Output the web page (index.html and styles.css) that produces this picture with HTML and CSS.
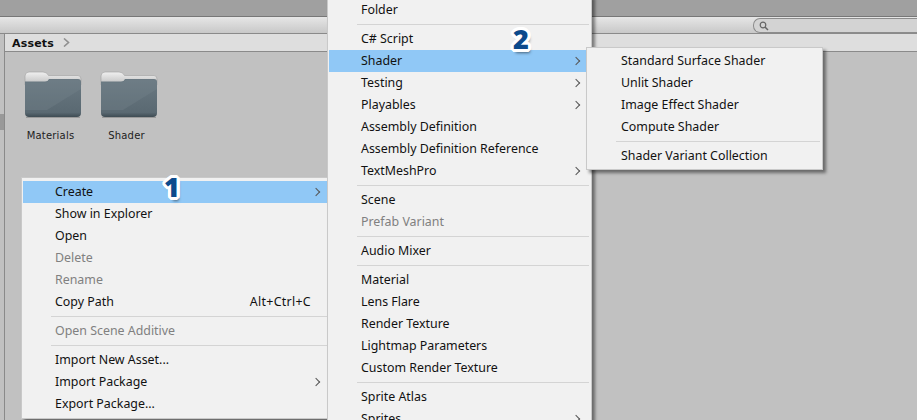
FILE: index.html
```html
<!DOCTYPE html>
<html lang="en">
<head>
<meta charset="UTF-8" />
<title>Assets - Create Shader</title>
<link rel="stylesheet" href="styles.css">
</head>
<body>
<svg class="defs" width="0" height="0">
    <defs>
        <linearGradient id="tabFill" x1="0" y1="0" x2="0" y2="1">
            <stop offset="0" stop-color="#f0f0f0"/>
            <stop offset="1" stop-color="#bdbdbd"/>
        </linearGradient>
        <linearGradient id="bodyFill" x1="0" y1="0" x2="0" y2="1">
            <stop offset="0" stop-color="#6a7982"/>
            <stop offset="0.88" stop-color="#5a6972"/>
            <stop offset="1" stop-color="#3e4b53"/>
        </linearGradient>
        <symbol id="folderIcon" viewBox="0 0 58 47">
            <path d="M1 5 Q1 1 5 1 H19 Q23 1 24.500 4.500 H54 Q57 4.500 57 8 V14 H1 Z" fill="url(#tabFill)" stroke="#a8a8a8" stroke-width="0.7"/>
            <path d="M1 10.500 H21 Q24 10.500 25 8 H54 Q57 8 57 11 V42 Q57 46 53 46 H5 Q1 46 1 42 Z" fill="url(#bodyFill)"/>
            <path d="M1 11.500 H21 Q24 11.500 25 9 H54 Q57 9 57 12 V18 L23 39 H1 Z" fill="#75848d" opacity="0.35"/>
            <path d="M2 46.500 H56" stroke="#9a9a9a" stroke-width="1"/>
        </symbol>
    </defs>
</svg>
<div class="topbar"></div>
<div class="toolbar">
    <div class="search">
        <svg class="search-icon" width="10" height="10" viewBox="0 0 10 10"><circle cx="4" cy="4" r="2.8" fill="none" stroke="#666" stroke-width="1.2"/><path d="M6 6 L9 9" stroke="#666" stroke-width="1.5"/></svg>
    </div>
</div>
<div class="main">
    <div class="sidebar"><div class="scroll-thumb"></div></div>
    <div class="browser">
        <div class="crumbs">
            <span class="crumb-name">Assets</span>
            <svg width="7" height="9" viewBox="0 0 7 9"><path d="M1 0.5 L5.5 4.500 L1 8.500" fill="none" stroke="#909090" stroke-width="1.6"/></svg>
        </div>
        <div class="files">
            <div class="file">
                <svg class="folder" width="58" height="47"><use href="#folderIcon"/></svg>
                <span class="file-name">Materials</span>
            </div>
            <div class="file">
                <svg class="folder" width="58" height="47"><use href="#folderIcon"/></svg>
                <span class="file-name">Shader</span>
            </div>
        </div>
    </div>
</div>

<!-- context menu -->
<div class="menu menu-context">
    <div class="item active">Create<span class="arrow"></span></div>
    <div class="item">Show in Explorer</div>
    <div class="item">Open</div>
    <div class="item off">Delete</div>
    <div class="item off">Rename</div>
    <div class="item">Copy Path<span class="key">Alt+Ctrl+C</span></div>
    <div class="sep"></div>
    <div class="item off">Open Scene Additive</div>
    <div class="sep"></div>
    <div class="item">Import New Asset...</div>
    <div class="item">Import Package<span class="arrow"></span></div>
    <div class="item">Export Package...</div>
</div>

<!-- create submenu -->
<div class="menu menu-create">
    <div class="item">Folder</div>
    <div class="sep"></div>
    <div class="item">C# Script</div>
    <div class="item active">Shader<span class="arrow"></span></div>
    <div class="item">Testing<span class="arrow"></span></div>
    <div class="item">Playables<span class="arrow"></span></div>
    <div class="item">Assembly Definition</div>
    <div class="item">Assembly Definition Reference</div>
    <div class="item">TextMeshPro<span class="arrow"></span></div>
    <div class="sep"></div>
    <div class="item">Scene</div>
    <div class="item off">Prefab Variant</div>
    <div class="sep"></div>
    <div class="item">Audio Mixer</div>
    <div class="sep"></div>
    <div class="item">Material</div>
    <div class="item">Lens Flare</div>
    <div class="item">Render Texture</div>
    <div class="item">Lightmap Parameters</div>
    <div class="item">Custom Render Texture</div>
    <div class="sep"></div>
    <div class="item">Sprite Atlas</div>
    <div class="item">Sprites<span class="arrow"></span></div>
</div>

<!-- shader submenu -->
<div class="menu menu-shader">
    <div class="item">Standard Surface Shader</div>
    <div class="item">Unlit Shader</div>
    <div class="item">Image Effect Shader</div>
    <div class="item">Compute Shader</div>
    <div class="sep"></div>
    <div class="item">Shader Variant Collection</div>
</div>

<span class="step step-1">1</span>
<span class="step step-2">2</span>
</body>
</html>
```

FILE: styles.css
```css
html, body {
    height: 100%;
}

body {
    margin: 0;
    height: 420px;
    overflow: hidden;
    position: relative;
    display: flex;
    flex-direction: column;
    background-color: #c1c1c1;
    font-family: "Noto Sans", sans-serif;
}

.defs {
    position: absolute;
}

.topbar {
    height: 16px;
    background-color: #a0a0a0;
    border-bottom: 1px solid #777;
}

.toolbar {
    height: 16px;
    background: linear-gradient(#e6e6e6, #c8c8c8);
    border-bottom: 1px solid #8a8a8a;
    display: flex;
    justify-content: flex-end;
}

.search {
    width: 158px;
    height: 13px;
    margin-top: 1px;
    border: 1px solid #8c8c8c;
    border-right: none;
    border-radius: 7px 0 0 7px;
    background-color: #d3d3d3;
    padding-left: 5px;
}

.search-icon {
    display: block;
    margin-top: 2px;
}

.main {
    flex: 1;
    display: flex;
}

.sidebar {
    width: 4px;
    background-color: #c1c1c1;
    border-right: 1px solid #8a8a8a;
    padding-top: 80px;
}

.scroll-thumb {
    height: 16px;
    background-color: #999;
}

.browser {
    flex: 1;
}

.crumbs {
    height: 17px;
    background-color: #dedede;
    border-bottom: 1px solid #8a8a8a;
    padding-left: 7px;
    display: flex;
    align-items: center;
    gap: 9px;
}

.crumb-name {
    font-family: "DejaVu Sans", sans-serif;
    font-size: 11px;
    font-weight: bold;
    letter-spacing: 0.2px;
    color: #111;
    padding-top: 1px;
}

.files {
    display: flex;
    gap: 18px;
    padding: 19px 0 0 19px;
}

.file {
    width: 58px;
    display: flex;
    flex-direction: column;
    align-items: center;
    gap: 12px;
}

.folder {
    display: block;
}

.file-name {
    font-family: "DejaVu Sans", sans-serif;
    font-size: 10px;
    letter-spacing: 0.2px;
    color: #222;
    line-height: 12px;
    margin-right: 5px;
}

.menu {
    position: absolute;
    background-color: #f1f1f1;
    border: 1px solid #c9c9c9;
    box-shadow: 3px 3px 3px rgba(0, 0, 0, 0.45);
    font-size: 12.4px;
    color: #111;
}

.menu-context {
    left: 21px;
    top: 177px;
    width: 310px;
    padding: 3px 1px;
}

.menu-create {
    left: 327px;
    top: -5px;
    width: 261px;
    padding: 3px 1px;
}

.menu-shader {
    left: 586px;
    top: 47px;
    width: 233px;
    padding: 2px 1px;
}

.menu-shader .item {
    padding-left: 33px;
}

.item {
    height: 22px;
    line-height: 21px;
    padding-left: 32px;
    position: relative;
    white-space: nowrap;
}

.item.active {
    background-color: #90c8f6;
}

.item.off {
    color: #808080;
}

.sep {
    height: 7px;
    margin-left: 28px;
    display: flex;
    align-items: center;
}

.sep::before {
    content: "";
    flex: 1;
    height: 1px;
    background-color: #d4d4d4;
    margin-right: 1px;
}

.arrow {
    position: absolute;
    right: 11px;
    top: 8px;
    width: 5px;
    height: 5px;
    border-top: 1px solid #555;
    border-right: 1px solid #555;
    transform: rotate(45deg);
}

.menu-context .arrow {
    right: 14px;
}

.key {
    position: absolute;
    right: 22px;
    letter-spacing: 0.3px;
}

.step {
    position: absolute;
    font-family: "Open Sans", sans-serif;
    font-size: 27px;
    font-weight: 800;
    line-height: 30px;
    color: #0c4a8c;
    text-shadow:
        3px 0 0 #fff, -3px 0 0 #fff, 0 3px 0 #fff, 0 -3px 0 #fff,
        2px 2px 0 #fff, -2px 2px 0 #fff, 2px -2px 0 #fff, -2px -2px 0 #fff,
        1px 3px 0 #fff, -1px 3px 0 #fff, 1px -3px 0 #fff, -1px -3px 0 #fff,
        3px 1px 0 #fff, -3px 1px 0 #fff, 3px -1px 0 #fff, -3px -1px 0 #fff,
        2px 4px 3px rgba(0, 0, 0, 0.5);
}

.step-1 {
    left: 164px;
    top: 172px;
}

.step-2 {
    left: 513px;
    top: 24px;
}
```
